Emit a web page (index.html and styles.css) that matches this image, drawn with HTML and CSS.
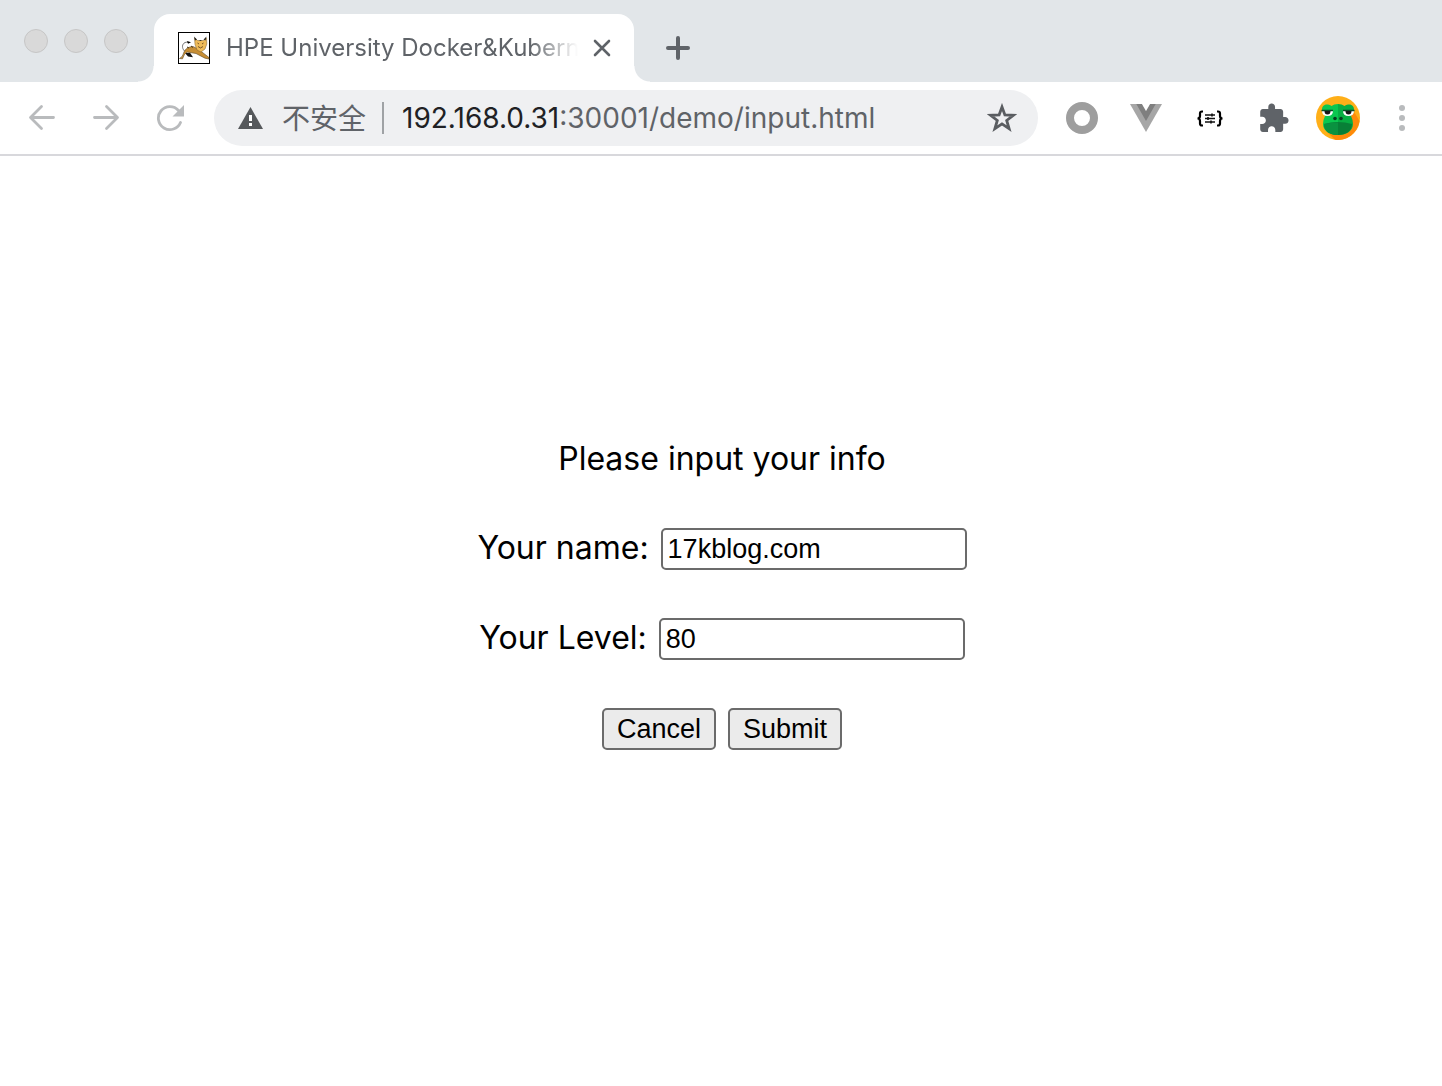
FILE: index.html
```html
<!DOCTYPE html>
<html lang="en">
<head>
<meta charset="utf-8">
<title>HPE University Docker&amp;Kubernetes</title>
<link rel="stylesheet" href="styles.css">
</head>
<body>
<header class="browser">
  <div class="tab-strip">
    <div class="window-controls">
      <span class="dot"></span><span class="dot"></span><span class="dot"></span>
    </div>
    <div class="tab">
      <svg class="favicon" viewBox="0 0 32 32" aria-hidden="true">
        <rect x=".5" y=".5" width="31" height="31" fill="#fff" stroke="#000"/>
        <path d="M6.500 19C3.500 16 4 12 7 10.500Q8.500 9.800 11 10.500" fill="none" stroke="#777" stroke-width="1"/>
        <path d="M9 9l4 1.300-3 1.400z" fill="#000"/>
        <path d="M7 21l3 3.500 5 .8-3-4.500z" fill="#111"/>
        <path d="M1.500 26.500Q5 25 6 20 8 15 15 14.500L20 17 31 25.500v1.500l-4-.8-9-4.700-9-1.500q-3 2-4.500 6.800z" fill="#c78e34" stroke="#5d4826" stroke-width=".6"/>
        <path d="M9 15l2 1M13 14l2 1.500" stroke="#4a3616" stroke-width="1"/>
        <path d="M16.500 6l3 2.500h6l3-2.500 .300 6-1.800 5-4 3-4-2-2-5.500z" fill="#efbb58" stroke="#7a5a28" stroke-width=".5"/>
        <path d="M16 4.500l3 3-2 1zM28.500 4.500l-3 3 2 1zM21 8h3l-1.500 1z" fill="#222"/>
        <path d="M19.500 11l1.500 1M25.500 11L24 12M20 14.500l2.500 1.500 2.500-1.500" fill="none" stroke="#6a4a20" stroke-width=".9"/>
      </svg>
      <span class="tab-title">HPE University Docker&amp;Kubern</span>
      <button class="tab-close" type="button" aria-label="Close tab">
        <svg width="18" height="18" viewBox="0 0 18 18"><path d="M2 2l14 14M16 2L2 16" stroke="#5f6368" stroke-width="2.600" stroke-linecap="round"/></svg>
      </button>
    </div>
    <button class="new-tab" type="button" aria-label="New tab">
      <svg width="24" height="24" viewBox="0 0 24 24"><path d="M12 2v20M2 12h20" stroke="#5f6368" stroke-width="4" stroke-linecap="round"/></svg>
    </button>
  </div>
  <div class="toolbar">
    <button class="tool" type="button" aria-label="Back">
      <svg width="28" height="28" viewBox="0 0 28 28"><path d="M25.500 13.500H3M13.500 2.500l-11 11 11 11" fill="none" stroke="#b9bbbd" stroke-width="2.800" stroke-linecap="round" stroke-linejoin="round"/></svg>
    </button>
    <button class="tool" type="button" aria-label="Forward">
      <svg width="28" height="28" viewBox="0 0 28 28"><path d="M2.500 13.500H25M14.500 2.500l11 11-11 11" fill="none" stroke="#b9bbbd" stroke-width="2.800" stroke-linecap="round" stroke-linejoin="round"/></svg>
    </button>
    <button class="tool" type="button" aria-label="Reload">
      <svg width="28" height="28" viewBox="0 0 28 28"><path d="M24.500 18.500A11.500 11.500 0 1 1 22.500 6.500" fill="none" stroke="#b9bbbd" stroke-width="2.800" stroke-linecap="round"/><path d="M28 1v11.500H16.500z" fill="#b9bbbd"/></svg>
    </button>
    <div class="omnibox">
      <svg class="warning" width="26" height="22" viewBox="0 0 26 22" aria-hidden="true"><path d="M12.500 0L25 22H0z" fill="#55585b"/><path d="M11 8h3v6h-3zM11 16h3v3h-3z" fill="#fff"/></svg>
      <span class="security">不安全</span>
      <span class="divider"></span>
      <span class="url"><span class="host">192.168.0.31</span>:30001/demo/input.html</span>
      <button class="star" type="button" aria-label="Bookmark this page">
        <svg width="30" height="30" viewBox="0 0 30 30"><path d="M15 4l2.900 8 8.500.3-6.700 5.200 2.400 8.200-7.100-4.800-7.100 4.800 2.400-8.200-6.700-5.200 8.500-.3z" fill="none" stroke="#5a5d61" stroke-width="2.800"/></svg>
      </button>
    </div>
    <button class="tool" type="button" aria-label="Ring extension">
      <svg width="32" height="32" viewBox="0 0 32 32"><circle cx="16" cy="16" r="12" fill="none" stroke="#9e9e9e" stroke-width="8"/></svg>
    </button>
    <button class="tool" type="button" aria-label="Vue devtools">
      <svg width="32" height="28" viewBox="0 0 32 28"><path d="M0 0h32L16 28z" fill="#a6a6a6"/><path d="M6.300 0H12l4 7 4-7h5.700L16 17z" fill="#7f7f7f"/><path d="M12 0h8l-4 7z" fill="#fff"/></svg>
    </button>
    <button class="tool" type="button" aria-label="JSON extension">
      <svg width="28" height="18" viewBox="0 0 28 18"><path d="M7 2.500H6Q4 2.500 4 4.500V7Q4 9.500 1.500 9.500 4 9.500 4 12v2.500q0 2 2 2h1M21 2.500h1q2 0 2 2V7q0 2.500 2.500 2.500-2.500 0-2.500 2.500v2.500q0 2-2 2h-1" fill="none" stroke="#000" stroke-width="2.200"/><path d="M9 6h10M9 9.500h10M9 13h10" stroke="#111" stroke-width="1.300"/><path d="M16 4.500v3M12 8v3M15 11.500v3" stroke="#111" stroke-width="1.600"/></svg>
    </button>
    <button class="tool" type="button" aria-label="Extensions">
      <svg width="36" height="36" viewBox="0 0 24 24"><path d="M20.500 11H19V7c0-1.100-.9-2-2-2h-4V3.500C13 2.120 11.880 1 10.500 1S8 2.120 8 3.500V5H4c-1.100 0-1.990.9-1.990 2v3.800H3.500c1.490 0 2.700 1.210 2.700 2.700s-1.210 2.700-2.700 2.700H2V20c0 1.100.9 2 2 2h3.800v-1.500c0-1.490 1.210-2.700 2.700-2.700s2.700 1.210 2.700 2.700V22H17c1.100 0 2-.9 2-2v-4h1.500c1.380 0 2.500-1.120 2.500-2.500S21.880 11 20.500 11z" fill="#5f6368" transform="translate(1 1.500) scale(.9)"/></svg>
    </button>
    <button class="tool" type="button" aria-label="Profile">
      <svg width="44" height="44" viewBox="0 0 44 44">
        <circle cx="22" cy="22" r="22" fill="#ffaf18"/>
        <path d="M37 14l6.500 11A22 22 0 0 1 19 43.800L10 35z" fill="#ff8a0a"/>
        <path d="M22 8v31C13 39 7 34.500 7 28q0-4 2-8-3-3-3-6.500C6 9.500 9 8 12 8.500q2 0 3.500 1.500Q18 8 22 8z" fill="#0bc750"/>
        <path d="M22 8v31c9 0 15-4.500 15-11q0-4-2-8 3-3 3-6.500C38 9.500 35 8 32 8.500q-2 0-3.500 1.500Q26 8 22 8z" fill="#08ad43"/>
        <path d="M8 28q14-4 28 0c0 7-6 11-14 11S8 35 8 28z" fill="#087f37"/>
        <path d="M22 26.500V39C14 39 8 35 8 28q7-1.500 14-1.500z" fill="#0a9240"/>
        <path d="M6 15h11q0 5-5.500 5T6 15zM27 15h11q0 5-5.500 5T27 15z" fill="#fff"/>
        <path d="M5.500 14.500H17M27 14.500h11.500" stroke="#064d25" stroke-width="1.600"/>
        <path d="M8.500 15h6q0 3.500-3 3.500t-3-3.500zM29.500 15h6q0 3.500-3 3.500t-3-3.500z" fill="#171717"/>
        <circle cx="19" cy="22.500" r="1.800" fill="#073e20"/><circle cx="25" cy="22.500" r="1.800" fill="#073e20"/>
      </svg>
    </button>
    <button class="tool" type="button" aria-label="Menu">
      <svg width="6" height="26" viewBox="0 0 6 26"><g fill="#b9bbbd"><circle cx="3" cy="3" r="3"/><circle cx="3" cy="13" r="3"/><circle cx="3" cy="23" r="3"/></g></svg>
    </button>
  </div>
</header>
<main>
  <form class="info-form">
    <p class="prompt">Please input your info</p>
    <div class="row"><label for="name">Your name:</label><input id="name" type="text" value="17kblog.com"></div>
    <div class="row"><label for="level">Your Level:</label><input id="level" type="text" value="80"></div>
    <div class="row"><button class="action" type="reset">Cancel</button><button class="action" type="submit">Submit</button></div>
  </form>
</main>
</body>
</html>
```
FILE: styles.css
```css
* { box-sizing: border-box; }

body {
  margin: 0;
  background: #fff;
  color: #000;
  font-family: Inter, "Noto Sans CJK SC", sans-serif;
}

button { cursor: pointer; }
svg { display: block; }

.tab-strip {
  display: flex;
  height: 82px;
  padding: 14px 24px 0;
  background: #e2e6e9;
}

.window-controls {
  display: flex;
  gap: 16px;
  width: 130px;
  padding-top: 15px;
}

.dot {
  width: 24px;
  height: 24px;
  border: 1px solid #c6c6c6;
  border-radius: 50%;
  background: #d9d9d9;
}

.tab {
  position: relative;
  display: flex;
  align-items: center;
  width: 480px;
  padding: 0 20px 0 24px;
  border-radius: 16px 16px 0 0;
  background: #fff;
}

.tab::before,
.tab::after {
  content: "";
  position: absolute;
  bottom: 0;
  width: 16px;
  height: 16px;
}

.tab::before {
  right: 100%;
  background: radial-gradient(circle at 0 0, transparent 15px, #fff 16px);
}

.tab::after {
  left: 100%;
  background: radial-gradient(circle at 100% 0, transparent 15px, #fff 16px);
}

.favicon {
  flex: none;
  width: 32px;
  height: 32px;
  margin-right: 16px;
}

.tab-title {
  flex: 1;
  color: #5f6368;
  font-size: 24px;
  line-height: 32px;
  white-space: nowrap;
  -webkit-mask-image: linear-gradient(to left, transparent 8px, #000 56px);
  mask-image: linear-gradient(to left, transparent 8px, #000 56px);
}

.tab-close,
.new-tab,
.tool,
.star {
  display: flex;
  flex: none;
  align-items: center;
  justify-content: center;
  padding: 0;
  border: 0;
  background: none;
}

.tab-close { width: 24px; height: 24px; margin-left: 4px; }
.new-tab { width: 88px; }

.toolbar {
  display: flex;
  align-items: center;
  height: 74px;
  padding: 0 8px 0 10px;
  border-bottom: 2px solid #d8d8dc;
}

.tool { width: 64px; height: 56px; }

.omnibox {
  display: flex;
  flex: 1;
  align-items: center;
  min-width: 0;
  height: 56px;
  margin: 0 12px;
  padding: 0 20px 0 24px;
  border-radius: 28px;
  background: #eff0f2;
  color: #5f6368;
  font-size: 28px;
  line-height: 40px;
}

.warning { flex: none; margin-right: 18px; }
.security { font-family: "Noto Sans CJK SC", sans-serif; line-height: 38px; padding-bottom: 2px; white-space: nowrap; }
.divider { width: 2px; height: 32px; margin: 0 18px 0 16px; background: #9fa2a5; }
.url { flex: 1; overflow: hidden; white-space: nowrap; }
.host { color: #202124; }
.star { width: 32px; height: 32px; }

.info-form {
  display: flex;
  flex-direction: column;
  gap: 48px;
  padding: 282px 16px 48px 18px;
  font-size: 32px;
  line-height: 42px;
}

.prompt { margin: 0; text-align: center; }

.row {
  display: flex;
  justify-content: center;
  gap: 12px;
}

.row label { line-height: 40px; }

.row input,
.action {
  height: 42px;
  border: 2px solid #6b6b6b;
  border-radius: 5px;
  color: #000;
  font-family: "Liberation Sans", Arial, sans-serif;
  font-size: 27px;
}

.row input { width: 306px; padding: 2px 5px; background: #fff; }
.action { width: 114px; padding: 0; background: #ebebeb; }
```
